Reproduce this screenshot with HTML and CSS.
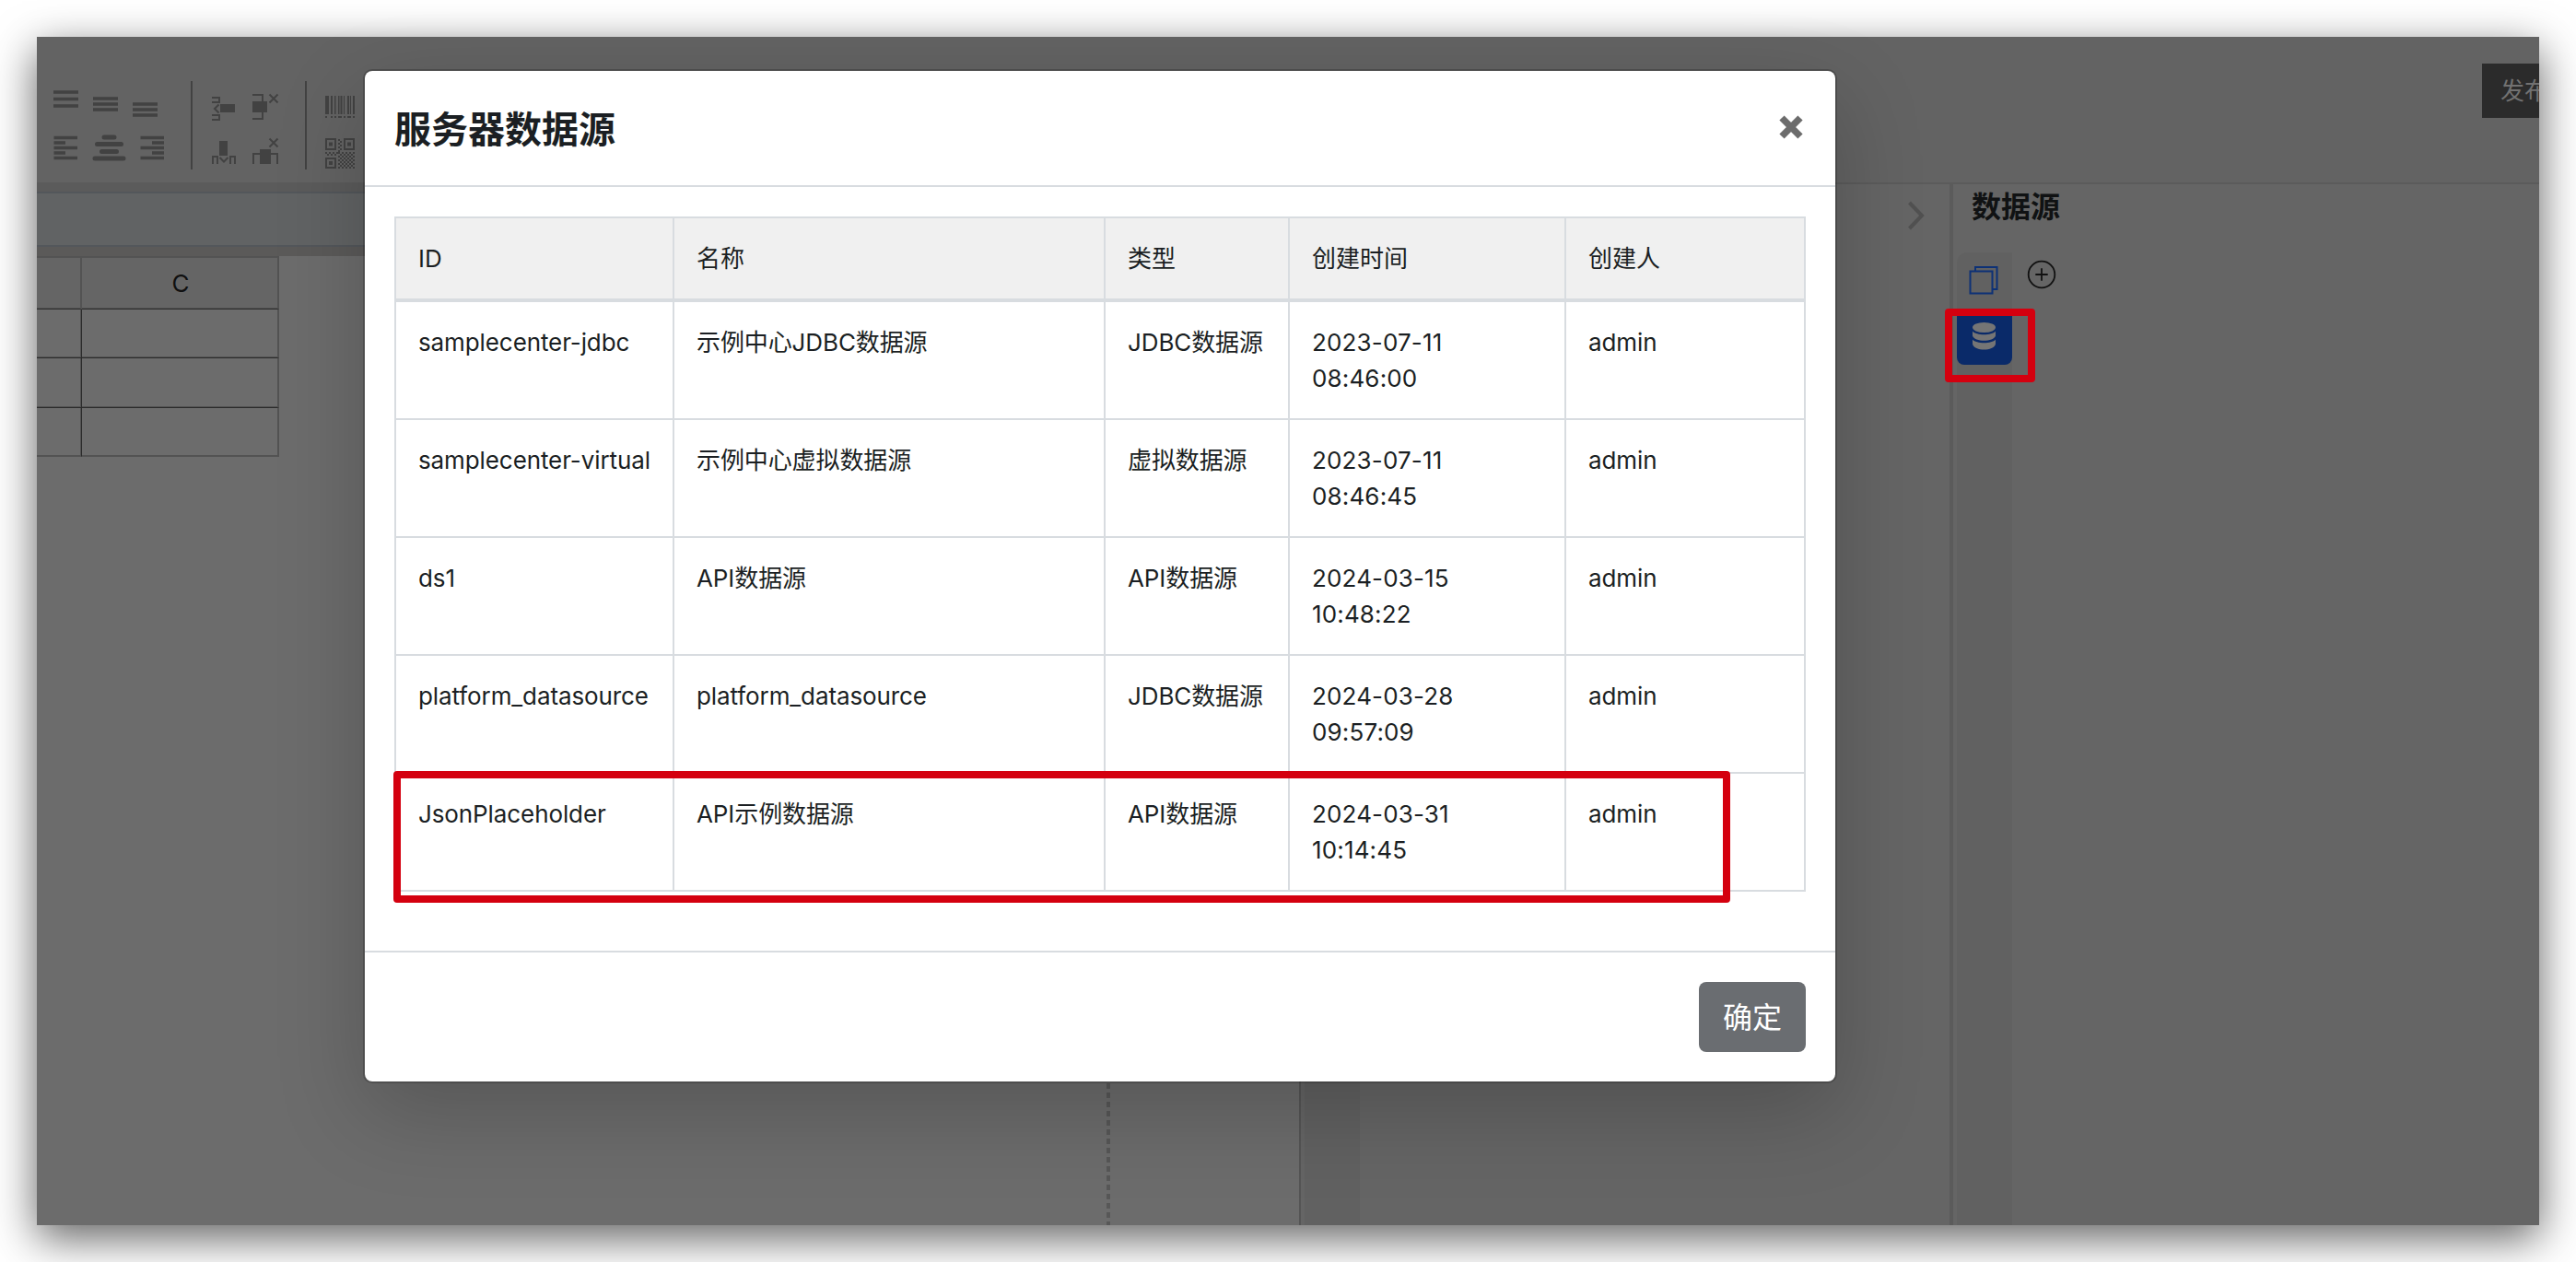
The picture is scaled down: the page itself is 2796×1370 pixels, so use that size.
FILE: index.html
```
<!DOCTYPE html>
<html lang="zh-CN">
<head>
  <meta charset="UTF-8">
  <title>服务器数据源</title>
  <link rel="stylesheet" href="styles.css">
</head>
<body>
  <div class="screen">
    <div class="toolbar">
      <svg class="tools tools-align" viewBox="40 40 167 158">
        <path class="line" d="M58 100h27M58 107.5h27M58 115h27M101 107h27M101 113h27M101 119h27M144 113h27M144 119h27M144 125h27"/>
        <path class="line" d="M58.5 149.5H84M58.5 155H71M58.5 160.5H84M58.5 166H71M58.5 171.5H84"/>
        <path class="line" d="M152.5 149.5H178M165 155H178M152.5 160.5H178M165 166H178M152.5 171.5H178"/>
        <path class="thick" d="M113 149h11M105.5 156.5h26M110.500 164.500h16M103 172h31"/>
      </svg>
      <span class="divider"></span>
      <svg class="tools tools-insert" viewBox="209 40 122 158">
        <path class="thin" d="M230 106h8v5h-8M230 125h8v5h-8M237.500 113.500l-4.500 4.500 4.500 4.500"/>
        <path class="fill" d="M239 113h16v9h-16z"/>
        <path class="thin" d="M274 103h11v8M285 121v8h-11M292.500 102.500l9 9M301.500 102.500l-9 9"/>
        <path class="fill" d="M274 110h16v12h-16z"/>
        <path class="thin" d="M231 178v-8h5v8M250 178v-8h5v8M238.500 171l4.500 4.500 4.500-4.500"/>
        <path class="fill" d="M238 153h9v16h-9z"/>
        <path class="thin" d="M275 178v-11h8M293 167h8v11M292.500 150.500l9 9M301.500 150.500l-9 9"/>
        <path class="fill" d="M282 162h12v16h-12z"/>
      </svg>
      <span class="divider"></span>
      <svg class="tools tools-code" viewBox="333 40 60 158">
        <path class="fill" d="M353 104h4v20h-4zM359 104h2v20h-2zM363 104h1.500v20h-1.500zM367 104h1.500v20h-1.500zM369.500 104h2v20h-2zM373 104h1v20h-1zM377 104h2v20h-2zM380 104h1v20h-1zM383 104h2v20h-2z"/>
        <path class="thin" stroke-dasharray="2 4 2 2 2 2 4 2 2 2 4 2 2" d="M353 127h32"/>
        <path class="thin" d="M354 151h10v11h-10zM374 151h10v11h-10zM354 172h10v10h-10z"/>
        <path class="fill" d="M357 154.500h4v4h-4zM377 154.500h4v4h-4zM357 175h4v4h-4z"/>
        <path class="dots" d="M368 151v14M370 153v12M353 166h14M355 168h12M367 166h18M369 168h16M367 170h18M369 172h16M367 174h18M369 176h16M367 178h18M369 180h16M367 182h18"/>
      </svg>
      <button class="publish">发布</button>
    </div>

    <div class="workspace">
      <div class="editor">
        <div class="formula-bar"></div>
        <div class="sheet">
          <div class="grid">
            <div class="cell head"></div><div class="cell head">C</div>
            <div class="cell"></div><div class="cell"></div>
            <div class="cell"></div><div class="cell"></div>
            <div class="cell last"></div><div class="cell last"></div>
          </div>
          <div class="page-edge"></div>
        </div>
      </div>
      <div class="side property">
        <div class="side-tabs"></div>
        <svg class="chevron" width="20" height="34" viewBox="0 0 20 34"><path d="M2.500 3l13.500 14-13.500 14"/></svg>
      </div>
      <div class="side datasource">
        <h2>数据源</h2>
        <div class="side-body">
          <div class="side-tabs">
            <div class="tab">
              <svg width="60" height="61" viewBox="0 0 60 61"><path class="copy" d="M14.500 20.500h24v24h-24zM20 20.500V16h23.500v24H39"/></svg>
            </div>
            <div class="tab active">
              <svg width="60" height="61" viewBox="0 0 60 61">
                <ellipse cx="29.500" cy="20.500" rx="12.500" ry="5.500"/>
                <path d="M17 24.500c4 5 21 5 25 0v5c-2 7-23 7-25 0zM17 33.500c4 5 21 5 25 0v5c-2 8-23 8-25 0z"/>
              </svg>
            </div>
          </div>
          <svg class="add" width="32" height="32" viewBox="0 0 32 32"><circle cx="16" cy="16" r="14.300"/><path d="M16 9.300v13.400M9.300 16h13.400"/></svg>
        </div>
      </div>
    </div>

    <div class="modal">
      <div class="modal-header">
        <h1>服务器数据源</h1>
        <svg class="close" width="26" height="26" viewBox="0 0 26 26"><path d="M3 3l20 20M23 3L3 23"/></svg>
      </div>
      <div class="modal-body">
        <table>
          <colgroup><col class="c-id"><col class="c-name"><col class="c-type"><col class="c-time"><col class="c-user"></colgroup>
          <thead>
            <tr><th>ID</th><th>名称</th><th>类型</th><th>创建时间</th><th>创建人</th></tr>
          </thead>
          <tbody>
            <tr><td>samplecenter-jdbc</td><td>示例中心JDBC数据源</td><td>JDBC数据源</td><td class="time">2023-07-11<br>08:46:00</td><td>admin</td></tr>
            <tr><td>samplecenter-virtual</td><td>示例中心虚拟数据源</td><td>虚拟数据源</td><td class="time">2023-07-11<br>08:46:45</td><td>admin</td></tr>
            <tr><td>ds1</td><td>API数据源</td><td>API数据源</td><td class="time">2024-03-15<br>10:48:22</td><td>admin</td></tr>
            <tr><td>platform_datasource</td><td>platform_datasource</td><td>JDBC数据源</td><td class="time">2024-03-28<br>09:57:09</td><td>admin</td></tr>
            <tr><td>JsonPlaceholder</td><td>API示例数据源</td><td>API数据源</td><td class="time">2024-03-31<br>10:14:45</td><td>admin</td></tr>
          </tbody>
        </table>
      </div>
      <div class="modal-footer">
        <button class="confirm">确定</button>
      </div>
    </div>

    <div class="mark mark-tab"></div>
    <div class="mark mark-row"></div>
  </div>
</body>
</html>
```
FILE: styles.css
```
* {
  box-sizing: border-box;
}

body {
  margin: 0;
  padding: 40px;
  height: 1370px;
  overflow: hidden;
  background: #fff;
  font-family: Inter, "Noto Sans CJK SC", sans-serif;
  font-size: 26px;
  line-height: 39px;
  color: #1b1f23;
}

.screen {
  position: relative;
  display: flex;
  flex-direction: column;
  width: 2716px;
  height: 1290px;
  background: #656565;
  box-shadow: 0 14px 44px rgba(0, 0, 0, 0.62);
}

/* toolbar */
.toolbar {
  display: flex;
  height: 158px;
  background: #636363;
  overflow: hidden;
}

.tools {
  flex: none;
  height: 158px;
}

.tools-align { width: 167px; }
.tools-insert { width: 122px; }
.tools-code { width: 60px; }

.tools path {
  fill: none;
  stroke: #424242;
}

.tools .line { stroke-width: 3.4; }
.tools .thin { stroke-width: 2; }
.tools .thick { stroke-width: 5; stroke-linecap: round; }
.tools .dots { stroke-width: 2; stroke-dasharray: 2 2; }
.tools .fill { fill: #424242; stroke: none; }

.divider {
  flex: none;
  width: 2px;
  height: 96px;
  margin-top: 48px;
  background: #424242;
}

.publish {
  flex: none;
  width: 110px;
  height: 59px;
  margin: 29px -48px 0 auto;
  padding: 0 0 0 20px;
  border: none;
  background: #2b2b2b;
  color: #717171;
  font: inherit;
  text-align: left;
}

/* workspace */
.workspace {
  display: flex;
  flex: 1;
}

.editor {
  display: flex;
  flex-direction: column;
  width: 1370px;
}

.formula-bar {
  height: 80px;
  border-top: 10px solid #5b5b5b;
  border-bottom: 10px solid #5b5a59;
  background: linear-gradient(#53575b 2px, #616364 2px, #616364 58px, #53575b 58px);
}

.sheet {
  display: flex;
  flex: 1;
  background: #6c6c6c;
}

.grid {
  display: grid;
  grid-template-columns: 49px 214px;
  grid-template-rows: 58px 53px 54px 53px;
  width: 263px;
  height: 218px;
}

.cell {
  border-right: 2px solid #535353;
  border-bottom: 1px solid #2b2b2b;
  box-shadow: inset 0 -1px #535353;
}

.cell:nth-child(odd):not(.head) {
  border-right-color: #2b2b2b;
  border-right-width: 1px;
  box-shadow: inset -1px 0 #535353, inset 0 -1px #535353;
}

.cell.head {
  padding-left: 2px;
  border-top: 2px solid #535353;
  background: #656565;
  color: #101010;
  text-align: center;
  line-height: 56px;
}

.cell.last {
  border-bottom-color: #535353;
}

.page-edge {
  width: 4px;
  margin-left: 898px;
  background: repeating-linear-gradient(#575757 0 6px, transparent 6px 10px);
  background-position: 0 -2px;
}

.side {
  border-top: 2px solid #5b5b5b;
}

.property {
  display: flex;
  justify-content: space-between;
  width: 706px;
  border-left: 2px solid #555;
  padding-left: 4px;
}

.side-tabs {
  width: 60px;
  background: #616161;
}

.chevron {
  margin: 17px 26px 0 0;
  fill: none;
  stroke: #515151;
  stroke-width: 4;
}

.datasource {
  display: flex;
  flex-direction: column;
  width: 640px;
  border-left: 4px solid #5b5b5b;
  padding-left: 4px;
}

.datasource h2 {
  margin: 0;
  padding: 1px 0 0 16px;
  height: 74px;
  font-size: 32px;
  line-height: 48px;
  font-weight: 700;
  color: #101213;
}

.side-body {
  display: flex;
  flex: 1;
}

.side-body .side-tabs {
  border-top-left-radius: 12px;
}

.tab {
  height: 61px;
}

.tab svg {
  display: block;
}

.copy {
  fill: none;
  stroke: #0d3176;
  stroke-width: 2;
}

.tab.active {
  border-radius: 8px;
  background: #0a2a69;
  fill: #757575;
}

.add {
  margin: 8px 0 0 16px;
  fill: none;
  stroke: #111;
  stroke-width: 1.8;
}

/* modal */
.modal {
  position: absolute;
  left: 354px;
  top: 35px;
  width: 1600px;
  border: 2px solid rgba(0, 0, 0, 0.2);
  border-radius: 10px;
  background: #fff;
  background-clip: padding-box;
  box-shadow: 0 32px 96px rgba(0, 0, 0, 0.2);
}

.modal-header {
  display: flex;
  align-items: center;
  justify-content: space-between;
  height: 126px;
  padding: 0 35px 0 32px;
  border-bottom: 2px solid #d8dce0;
}

.modal-header h1 {
  margin: 0;
  padding-top: 3px;
  font-size: 40px;
  line-height: 60px;
  font-weight: 600;
}

.close {
  margin-bottom: 2px;
  stroke: #6c6c6c;
  stroke-width: 7.4;
}

.modal-body {
  padding: 32px 32px 64px;
}

table {
  width: 1532px;
  table-layout: fixed;
  border-collapse: separate;
  border-spacing: 0;
  border-top: 2px solid #d8dce0;
  border-left: 2px solid #d8dce0;
}

.c-id { width: 302px; }
.c-name { width: 468px; }
.c-type { width: 200px; }
.c-time { width: 300px; }
.c-user { width: 260px; }

th, td {
  padding: 24px 0 24px 24px;
  border-right: 2px solid #d8dce0;
  border-bottom: 2px solid #d8dce0;
  font-weight: 400;
  text-align: left;
  vertical-align: top;
  white-space: nowrap;
}

td {
  letter-spacing: -0.1px;
}

.time {
  letter-spacing: 0.15px;
}

th {
  border-bottom-width: 4px;
  background: #f0f0f0;
}

.modal-footer {
  display: flex;
  justify-content: flex-end;
  padding: 32px;
  border-top: 2px solid #d8dce0;
}

.confirm {
  width: 116px;
  height: 76px;
  padding: 2px 0 0;
  border: none;
  border-radius: 8px;
  background: #6a6d71;
  color: #fff;
  font: 400 32px/48px Inter, "Noto Sans CJK SC", sans-serif;
}

/* highlight boxes */
.mark {
  position: absolute;
  border: 8px solid #d4000f;
  border-radius: 4px;
}

.mark-tab {
  left: 2071px;
  top: 295px;
  width: 98px;
  height: 80px;
}

.mark-row {
  left: 387px;
  top: 797px;
  width: 1451px;
  height: 143px;
}
```
